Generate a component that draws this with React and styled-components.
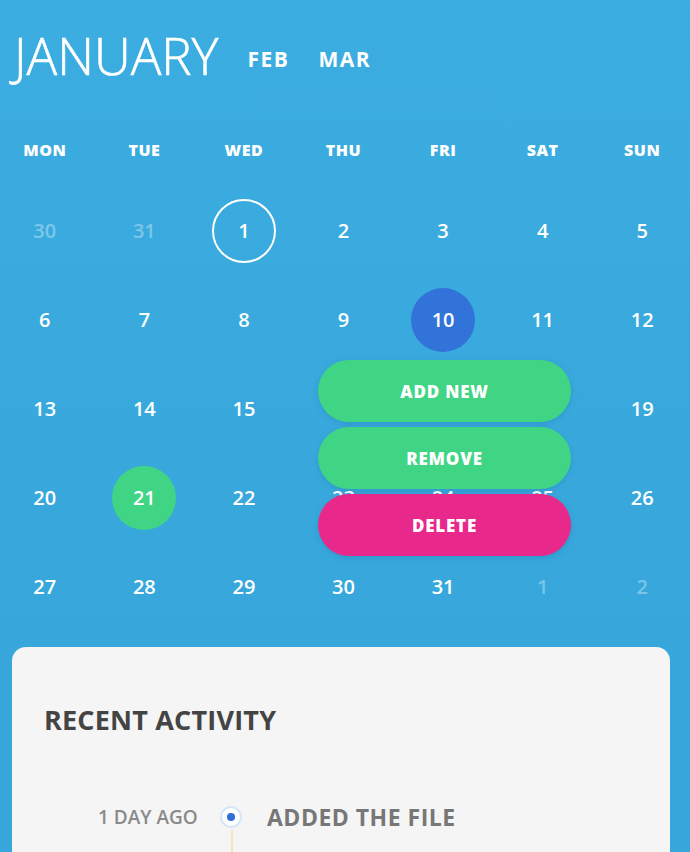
import React from 'react'
import styled, { createGlobalStyle } from 'styled-components'

const Global = createGlobalStyle`
    html, body {
        margin: 0;
        padding: 0;
        background: #39a9dd;
    }
    * { box-sizing: border-box; }
`

const Page = styled.div`
    width: 690px;
    height: 852px;
    overflow: hidden;
    background: linear-gradient(180deg, #3cade0 0%, #38a8dc 60%, #36a6db 100%);
    font-family: 'Open Sans', 'Noto Sans', sans-serif;
    color: #fff;
`

const Header = styled.div`
    display: flex;
    align-items: center;
    gap: 29px;
    height: 120px;
    padding: 0 0 10px 14px;
`

const Month = styled.span`
    font-family: 'Open Sans', sans-serif;
    font-size: ${p => (p.$big ? '51px' : '21px')};
    font-weight: ${p => (p.$big ? 300 : 700)};
    letter-spacing: ${p => (p.$big ? '0' : '1.5px')};
    margin-top: ${p => (p.$big ? '0' : '8px')};
    -webkit-text-stroke: ${p => (p.$big ? '0.6px #fff' : '0')};
`

const Grid = styled.div`
    display: grid;
    grid-template-columns: repeat(7, 1fr);
    margin: 0 -2px 0 -5px;
    position: relative;
`

const DayName = styled.div`
    height: 60px;
    display: flex;
    align-items: center;
    justify-content: center;
    font-size: 16px;
    font-weight: 800;
    letter-spacing: 0.5px;
    margin-bottom: 6px;
`

const Cell = styled.div`
    height: 89px;
    display: flex;
    align-items: center;
    justify-content: center;
`

const Day = styled.div`
    width: 64px;
    height: 64px;
    border-radius: 50%;
    display: flex;
    align-items: center;
    justify-content: center;
    font-size: 20px;
    font-weight: 600;
    color: ${p => (p.$muted ? 'rgba(255,255,255,0.35)' : '#fff')};
    border: ${p => (p.$kind === 'today' ? '2px solid #fff' : '2px solid transparent')};
    background: ${p =>
        p.$kind === 'selected' ? '#3173d9' : p.$kind === 'event' ? '#3fd584' : 'transparent'};
`

const Menu = styled.div`
    position: absolute;
    left: 323px;
    top: 240px;
    width: 253px;
    display: flex;
    flex-direction: column;
    gap: 5px;
`

const Action = styled.button`
    height: 62px;
    border: none;
    border-radius: 31px;
    background: ${p => (p.$danger ? '#e8288b' : '#3fd584')};
    color: #fff;
    font-family: 'Open Sans', sans-serif;
    font-size: 17px;
    font-weight: 800;
    letter-spacing: 0.8px;
    box-shadow: 0 2px 6px rgba(0, 60, 120, 0.15);
`

const Card = styled.div`
    margin: 16px 20px 0 12px;
    height: 260px;
    background: #f5f5f5;
    border-radius: 14px;
    padding: 54px 32px 0;
`

const CardTitle = styled.div`
    font-size: 27px;
    font-weight: 700;
    color: #444;
    letter-spacing: 0.2px;
`

const Entry = styled.div`
    display: flex;
    align-items: center;
    margin-top: 63px;
    padding-left: 54px;
`

const When = styled.span`
    font-size: 19px;
    font-weight: 600;
    color: #8a8a8a;
    width: 122px;
`

const Dot = styled.span`
    width: 22px;
    height: 22px;
    border-radius: 50%;
    background: #fff;
    border: 2px solid #d6e6f7;
    display: flex;
    align-items: center;
    justify-content: center;
    position: relative;
    &::before {
        content: '';
        width: 8px;
        height: 8px;
        border-radius: 50%;
        background: #2f6fd6;
    }
    &::after {
        content: '';
        position: absolute;
        top: 22px;
        left: 9px;
        width: 2px;
        height: 40px;
        background: #f1e6b8;
    }
`

const What = styled.span`
    font-size: 23px;
    font-weight: 700;
    color: #777;
    margin-left: 25px;
    letter-spacing: 0.5px;
`

const names = ['MON', 'TUE', 'WED', 'THU', 'FRI', 'SAT', 'SUN']

const days = [
    { n: 30, muted: true }, { n: 31, muted: true },
    ...Array.from({ length: 31 }, (_, i) => ({ n: i + 1 })),
    { n: 1, muted: true }, { n: 2, muted: true },
]

const kindOf = d => {
    if (d.muted) return null
    if (d.n === 1) return 'today'
    if (d.n === 10) return 'selected'
    if (d.n === 21) return 'event'
    return null
}

export default function App() {
    return (
        <Page>
            <Global />
            <Header>
                <Month $big>JANUARY</Month>
                <Month>FEB</Month>
                <Month>MAR</Month>
            </Header>
            <Grid>
                {names.map(n => <DayName key={n}>{n}</DayName>)}
                {days.map((d, i) => (
                    <Cell key={i}>
                        <Day $muted={d.muted} $kind={kindOf(d)}>{d.n}</Day>
                    </Cell>
                ))}
                <Menu>
                    <Action>ADD NEW</Action>
                    <Action>REMOVE</Action>
                    <Action $danger>DELETE</Action>
                </Menu>
            </Grid>
            <Card>
                <CardTitle>RECENT ACTIVITY</CardTitle>
                <Entry>
                    <When>1 DAY AGO</When>
                    <Dot />
                    <What>ADDED THE FILE</What>
                </Entry>
            </Card>
        </Page>
    )
}
